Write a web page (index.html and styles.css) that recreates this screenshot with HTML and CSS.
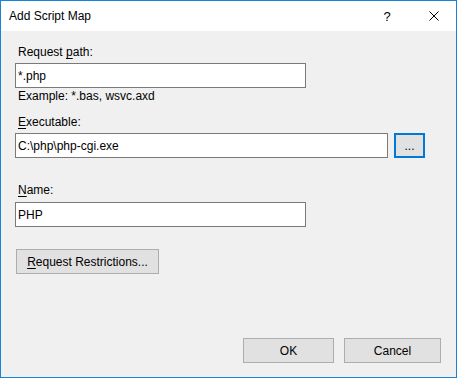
FILE: index.html
```html
<!DOCTYPE html>
<html>
<head>
<meta charset="utf-8">
<link rel="stylesheet" href="styles.css">
</head>
<body>
<div class="window">
  <div class="titlebar">
    <div class="title">Add Script Map</div>
    <div class="caption-btn help">?</div>
    <div class="caption-btn close">
      <svg width="10" height="10" viewBox="0 0 10 10"><path d="M0.5 0.5 L9.5 9.5 M9.5 0.5 L0.5 9.5" stroke="#000" stroke-width="1" fill="none"/></svg>
    </div>
  </div>
  <div class="content">
    <div class="label first">Request <u>p</u>ath:</div>
    <input class="field short" type="text" value="*.php">
    <div class="hint">Example: *.bas, wsvc.axd</div>
    <div class="label exe"><u>E</u>xecutable:</div>
    <div class="row">
      <input class="field long" type="text" value="C:\php\php-cgi.exe">
      <button class="btn browse">...</button>
    </div>
    <div class="label name"><u>N</u>ame:</div>
    <input class="field short name-field" type="text" value="PHP">
    <button class="btn restrict"><u>R</u>equest Restrictions...</button>
    <div class="footer">
      <button class="btn ok">OK</button>
      <button class="btn cancel">Cancel</button>
    </div>
  </div>
</div>
</body>
</html>
```
FILE: styles.css
```css
html, body {
  margin: 0;
  padding: 0;
}
body {
  font-family: "Liberation Sans", Arial, sans-serif;
  font-size: 12px;
  color: #000;
  background: #f0f0f0;
}
.window {
  width: 457px;
  height: 378px;
  box-sizing: border-box;
  border: 1px solid #1883d7;
  display: flex;
  flex-direction: column;
  background: #f0f0f0;
}
.titlebar {
  height: 30px;
  background: #fff;
  display: flex;
  align-items: center;
  flex-shrink: 0;
}
.title {
  flex: 1;
  padding-left: 8px;
  font-size: 12px;
  line-height: 30px;
}
.caption-btn {
  width: 46px;
  height: 30px;
  display: flex;
  align-items: center;
  justify-content: center;
}
.help {
  font-size: 13px;
  padding-top: 1px;
  box-sizing: border-box;
}
.close svg {
  display: block;
  margin-left: 1px;
}
.content {
  flex: 1;
  display: flex;
  flex-direction: column;
  align-items: flex-start;
  padding: 14px 15px 14px 14px;
}
.label {
  line-height: 15px;
  padding-left: 3px;
}
.label u, .restrict u {
  text-underline-offset: 2px;
}
.label.exe {
  margin-top: 11px;
}
.label.name {
  margin-top: 25px;
}
.field {
  box-sizing: border-box;
  height: 25px;
  border: 1px solid #7a7a7a;
  background: #fff;
  padding: 0 2px;
  margin: 3px 0 0 0;
  font: inherit;
  color: #000;
  outline: none;
}
.field.short {
  width: 291px;
}
.field.name-field {
  margin-top: 4px;
}
.hint {
  line-height: 15px;
  margin-top: 1px;
  padding-left: 3px;
}
.row {
  display: flex;
  gap: 6px;
  margin-top: 3px;
}
.row .field {
  margin: 0;
}
.field.long {
  width: 373px;
}
.btn {
  box-sizing: border-box;
  height: 25px;
  border: 1px solid #adadad;
  background: #e1e1e1;
  font: inherit;
  color: #000;
  padding: 0;
  margin: 0;
}
.browse {
  width: 31px;
  border: 2px solid #0078d7;
}
.restrict {
  width: 143px;
  margin-top: 22px;
  margin-left: 1px;
}
.footer {
  margin-top: auto;
  align-self: flex-end;
  display: flex;
  gap: 10px;
}
.ok {
  width: 91px;
}
.cancel {
  width: 97px;
}
```
